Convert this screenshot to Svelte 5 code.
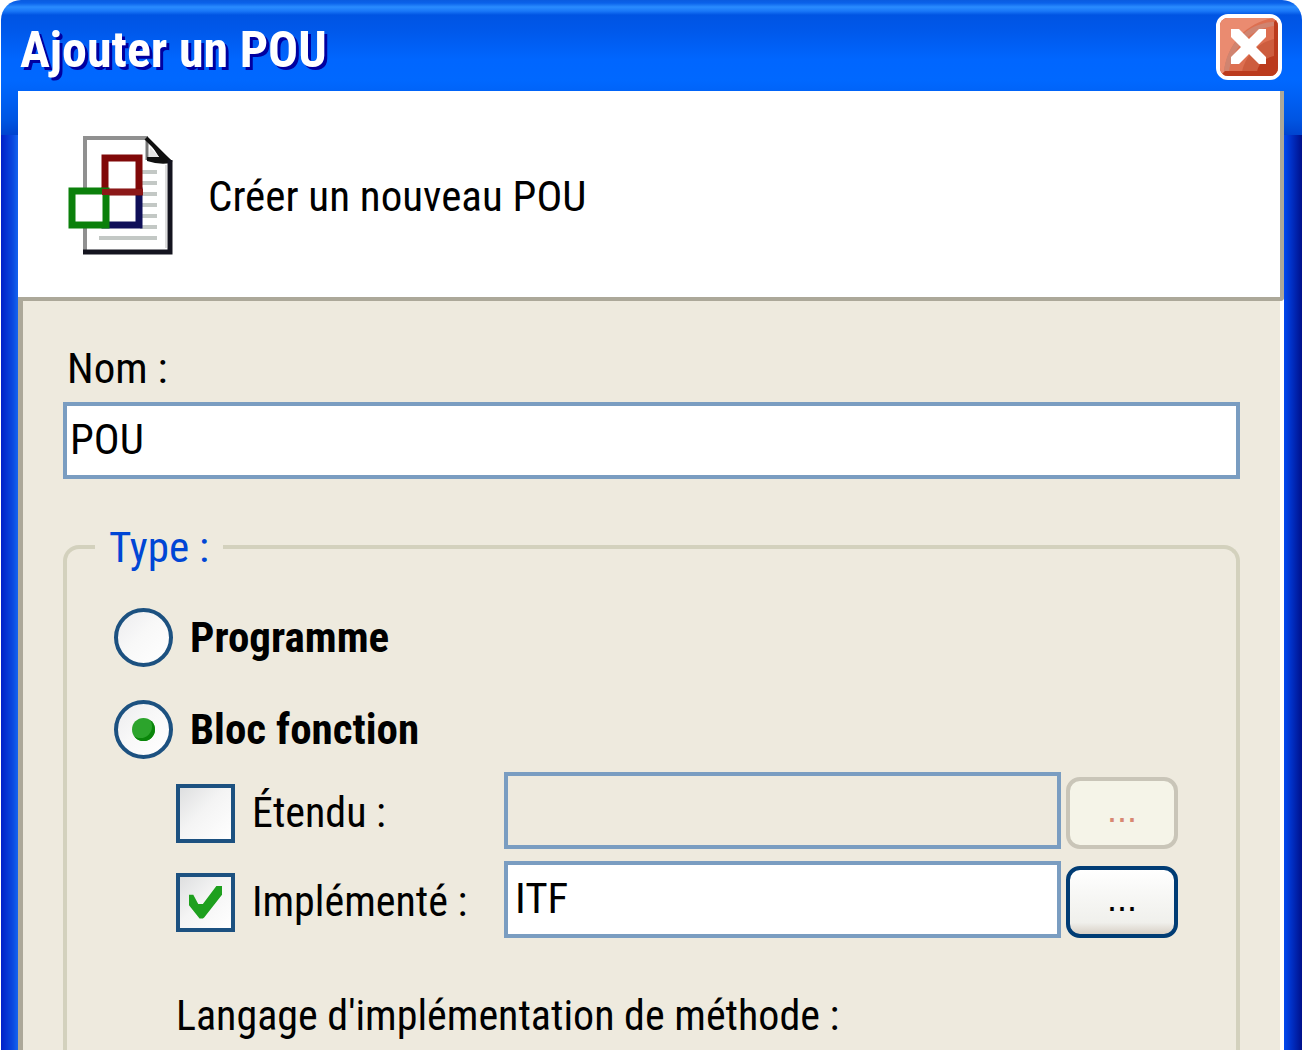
<script lang="ts">
	let name = $state('POU');
	let kind = $state('block');
	let isExtended = $state(false);
	let isImplemented = $state(true);
	let baseBlock = $state('');
	let interfaceName = $state('ITF');
</script>

<main class="window">
	<header class="titlebar">
		<h1>Ajouter un POU</h1>
		<button class="close" type="button" aria-label="Fermer">
			<svg viewBox="0 0 58 58" aria-hidden="true">
				<rect width="58" height="58" fill="#dd6f50" />
				<path d="M0 0H54C28 4 8 24 4 54L0 58Z" fill="#ea8b70" />
				<path d="M4 54C6 28 26 5 54 4V8C30 11 12 30 9 54Z" fill="#d08470" />
				<path d="M22 54C25 38 38 25 54 21V54Z" fill="#cd5d3e" />
				<path d="M37 54C38 46 45 40 54 38V54Z" fill="#bb3b1d" />
				<path d="M54 4L58 0V58H0L5 53H54Z" fill="#bb3b1d" />
				<path
					d="M11 11H19L29 21L39 11H46V19L36 29L46 39V46H39L29 36L19 46H11V39L21 29L11 19Z"
					fill="#fff"
				/>
			</svg>
		</button>
	</header>

	<section class="banner">
		<svg class="document" viewBox="0 0 106 120" aria-hidden="true">
			<path d="M17 2H80L103 26V117H17Z" fill="#fff" />
			<path d="M17 117V2H80" fill="none" stroke="#909090" stroke-width="4" />
			<path d="M79 4V24" stroke="#777" stroke-width="3" />
			<path d="M78 2L103 27" stroke="#101010" stroke-width="4" />
			<path d="M80 4L103 24V27Q91 29 79 25V21H91Z" fill="#101010" />
			<path d="M82 11L91 21L81 21Z" fill="#e4e4e4" />
			<path d="M102 24V116H15" fill="none" stroke="#14141f" stroke-width="5" />
			<path d="M98 29V112" stroke="#bbb" stroke-width="1" />
			<path
				d="M72 36H89M72 47H89M72 58H89M72 69H89M72 80H89M72 91H89M31 102H89"
				stroke="#c3c8c5"
				stroke-width="4"
			/>
			<rect x="37" y="55" width="34" height="34" fill="#fff" stroke="#0f0f58" stroke-width="7" />
			<rect x="37" y="22" width="34" height="34" fill="#fff" stroke="#800808" stroke-width="7" />
			<rect x="4" y="55" width="34" height="34" fill="#fff" stroke="#0b800b" stroke-width="7" />
			<path d="M34 56H75" stroke="#8c1818" stroke-width="6" />
		</svg>
		<p>Créer un nouveau POU</p>
	</section>

	<form class="body">
		<label class="name-label" for="name">Nom :</label>
		<input class="field" id="name" type="text" bind:value={name} />

		<fieldset>
			<legend>Type :</legend>

			<label class="kind">
				<input type="radio" name="kind" value="program" bind:group={kind} />
				Programme
			</label>
			<label class="kind">
				<input type="radio" name="kind" value="block" bind:group={kind} />
				Bloc fonction
			</label>

			<div class="options">
				<div class="option">
					<label>
						<input type="checkbox" bind:checked={isExtended} />
						Étendu :
					</label>
					<input
						class="field"
						type="text"
						aria-label="Étendu"
						disabled={!isExtended}
						bind:value={baseBlock}
					/>
					<button class="browse" type="button" disabled={!isExtended}>...</button>
				</div>
				<div class="option">
					<label>
						<input type="checkbox" bind:checked={isImplemented} />
						Implémenté :
					</label>
					<input
						class="field"
						type="text"
						aria-label="Implémenté"
						disabled={!isImplemented}
						bind:value={interfaceName}
					/>
					<button class="browse" type="button" disabled={!isImplemented}>...</button>
				</div>
				<p>Langage d'implémentation de méthode :</p>
			</div>
		</fieldset>
	</form>
</main>

<style>
	:global(body) {
		margin: 0;
		background: #fff;
	}

	.window {
		margin: 0 1px;
		padding: 0 18px 0 17px;
		border-radius: 20px 20px 0 0;
		background:
			linear-gradient(
					#0a5be0 0,
					#0a62ea 3px,
					#2a8cff 7px,
					#1a78f8 11px,
					#0054e3 15px,
					#0058ea 30px,
					#0066ff 60px,
					#0068ff 80px,
					#0060f4 98px,
					#0055e2 120px,
					#0044cf 135px
				)
				top / 100% 135px no-repeat,
			linear-gradient(90deg, #0020c8, #0a4ae0 12px, #1464f0 17px) left / 17px 100% no-repeat,
			linear-gradient(90deg, #0048f0, #0028b8 10px, #00108a 18px) right / 18px 100% no-repeat;
		font-family: 'Liberation Sans Narrow', 'Arial Narrow', 'Roboto Condensed', sans-serif;
		font-size: 43px;
		line-height: 48px;
		color: #000;
	}

	.titlebar {
		display: flex;
		justify-content: space-between;
		align-items: flex-start;
		box-sizing: border-box;
		height: 91px;
		padding: 14px 2px 0;
	}

	h1 {
		margin: 0;
		padding-top: 8px;
		font-size: 50px;
		line-height: 56px;
		color: #fff;
		text-shadow: 3px 3px 0 #0000a0;
	}

	.close {
		box-sizing: border-box;
		width: 66px;
		height: 66px;
		padding: 0;
		overflow: hidden;
		border: 4px solid #fff;
		border-radius: 12px;
		background: #dd6f50;
	}

	.close svg {
		display: block;
	}

	.banner {
		display: flex;
		align-items: center;
		gap: 34px;
		box-sizing: border-box;
		height: 210px;
		padding: 4px 50px 0;
		border-right: 4px solid #aca899;
		border-bottom: 4px solid #aca899;
		border-radius: 0 0 4px 0;
		background: #fff;
	}

	.document {
		flex: none;
		width: 106px;
		height: 120px;
	}

	p {
		margin: 0;
	}

	.body {
		padding: 43px 40px 0;
		border-left: 5px solid #aca899;
		border-right: 4px solid #fff;
		background: #eeeade;
	}

	.name-label {
		display: block;
		margin: 0 0 10px 4px;
	}

	.field {
		box-sizing: border-box;
		width: 100%;
		height: 77px;
		padding: 0 0 4px 3px;
		border: 4px solid #7a9dc1;
		border-radius: 0;
		background: #fff;
		font: inherit;
		color: inherit;
	}

	.field:disabled {
		background: #eeeade;
	}

	fieldset {
		min-width: 0;
		margin: 44px 0 0;
		padding: 37px 58px 10px 47px;
		border: 4px solid #d3d1bd;
		border-bottom: 0;
		border-radius: 16px 16px 0 0;
	}

	legend {
		margin-left: -19px;
		padding: 0 14px;
		color: #0046d5;
	}

	.kind {
		display: flex;
		align-items: center;
		gap: 17px;
		height: 58px;
		margin-bottom: 34px;
		font-weight: bold;
	}

	input[type='radio'],
	input[type='checkbox'] {
		flex: none;
		display: grid;
		place-items: center;
		box-sizing: border-box;
		width: 59px;
		height: 59px;
		margin: 0;
		border: 4px solid #1c5180;
		appearance: none;
		background: linear-gradient(135deg, #dedfe0, #f4f4f4 45%, #fff);
	}

	input[type='radio'] {
		border-radius: 50%;
		background: linear-gradient(135deg, #ececee, #f8f8f8 45%, #fff);
	}

	input[type='radio']:checked::before {
		content: '';
		width: 23px;
		height: 23px;
		border-radius: 50%;
		background: #2ca42c;
		box-shadow: inset -3px -3px 0 #0a860a;
	}

	input[type='checkbox']:checked::before {
		content: '';
		width: 33px;
		height: 33px;
		background: #1ea01e;
		clip-path: polygon(0 28%, 13% 28%, 28% 56%, 42% 56%, 84% 0, 100% 0, 100% 28%, 46% 97%, 42% 100%, 32% 100%, 0 60%);
	}

	.options {
		margin: -20px 0 0 62px;
	}

	.option {
		display: flex;
		align-items: flex-end;
		margin-bottom: 12px;
	}

	.option label {
		flex: none;
		display: flex;
		align-items: center;
		gap: 17px;
		width: 328px;
		height: 72px;
		font-size: 42px;
		white-space: nowrap;
	}

	.option .field {
		flex: 1;
		min-width: 0;
		padding-left: 7px;
	}

	.browse {
		flex: none;
		box-sizing: border-box;
		width: 112px;
		height: 72px;
		margin-left: 5px;
		padding: 0 0 6px;
		border: 4px solid #003c74;
		border-radius: 14px;
		background: linear-gradient(#fff, #f8f8f6 35%, #f0f0ec 82%, #d8d0c6);
		font-family: 'Liberation Sans', sans-serif;
		font-size: 36px;
		color: #000;
	}

	.browse:disabled {
		border-color: #c9c5b8;
		background: #f5f4e8;
		color: #d88872;
	}

	.options p {
		margin-top: 54px;
		font-size: 42px;
	}
</style>
